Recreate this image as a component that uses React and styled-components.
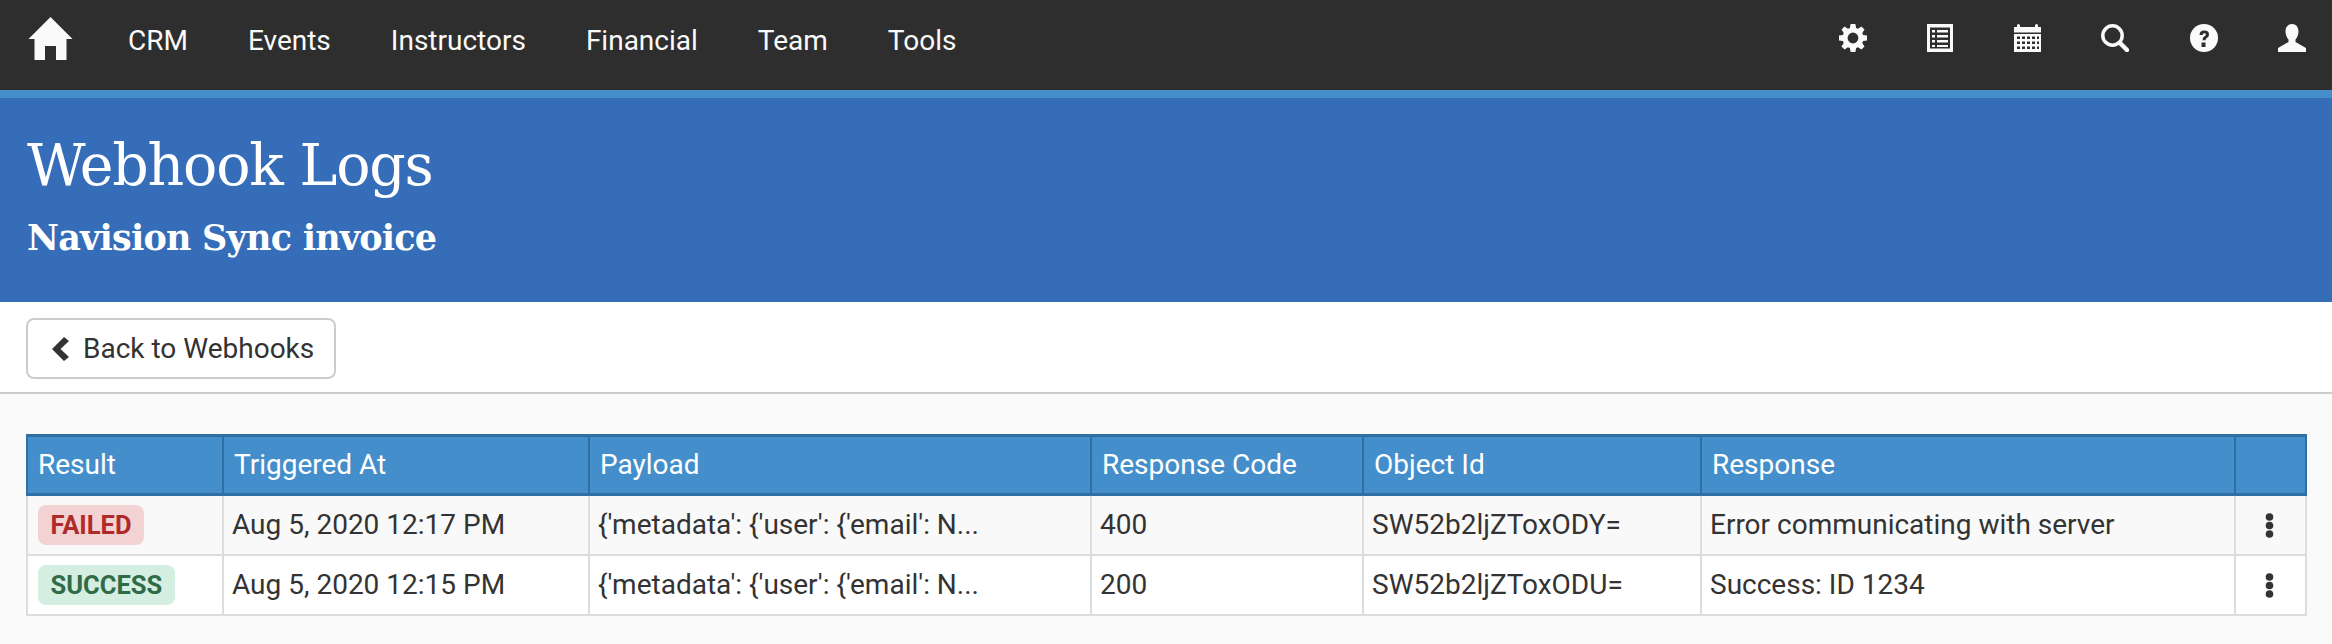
import React from "react";
import styled, { createGlobalStyle } from "styled-components";

const Global = createGlobalStyle`
  html, body { margin: 0; padding: 0; background: #fafafa; }
  body { font-family: Roboto, "Liberation Sans", sans-serif; color: #333; }
`;

const Nav = styled.nav`
  height: 90px;
  background: #2e2e2e;
  display: flex;
  align-items: flex-start;
  justify-content: space-between;
  padding: 0 26px 0 28px;
`;
const NavLeft = styled.div`
  display: flex;
  align-items: center;
  gap: 60px;
`;
const HomeLink = styled.a`
  display: block;
  height: 43px;
  margin: 17px -5px 0 0;
  svg { display: block; }
`;
const NavItem = styled.a`
  font-size: 28px;
  line-height: 30px;
  color: #fafafa;
  margin-top: 22px;
`;
const NavRight = styled.div`
  display: flex;
  gap: 60.5px;
  margin-top: 24px;
  svg { display: block; }
`;
const Banner = styled.header`
  box-sizing: content-box;
  height: 204px;
  background: #356db9;
  border-top: 8px solid #448fcb;
  padding: 0 27px;
  color: #fff;
`;
const Title = styled.h1`
  margin: 0;
  padding-top: 32px;
  font-family: "DejaVu Serif", serif;
  font-weight: 400;
  font-size: 57px;
  letter-spacing: -1.2px;
  line-height: 70px;
`;
const Subtitle = styled.h2`
  margin: 0;
  padding-top: 15px;
  font-family: "DejaVu Serif", serif;
  font-weight: 700;
  font-size: 35px;
  letter-spacing: -0.8px;
  line-height: 46px;
`;
const Toolbar = styled.div`
  height: 74px;
  background: #fff;
  border-bottom: 2px solid #ccc;
  padding: 16px 26px 0;
  box-sizing: content-box;
`;
const BackButton = styled.button`
  height: 61px;
  width: 310px;
  box-sizing: border-box;
  border: 2px solid #ccc;
  border-radius: 8px;
  background: #fff;
  color: #333;
  font: 400 28px Roboto, sans-serif;
  display: flex;
  align-items: center;
  gap: 14px;
  padding: 0 0 0 24px;
  svg { display: block; }
`;
const Content = styled.main`
  padding: 40px 27px 28px 26px;
`;
const Table = styled.table`
  width: 2279px;
  table-layout: fixed;
  border-collapse: collapse;
  font-size: 28px;
`;
const Col = styled.col`
  width: ${(p) => p.$w}px;
`;
const Th = styled.th`
  background: #448fcb;
  color: #fff;
  font-weight: 400;
  text-align: left;
  height: 54px;
  padding: 0 10px 2px;
  border: 2px solid #306fa3;
  border-top-width: 3px;
  border-bottom-width: 3px;
  overflow: hidden;
`;
const Row = styled.tr`
  background: ${(p) => (p.$odd ? "#f9f9f9" : "#fff")};
`;
const Td = styled.td`
  height: 56px;
  padding: 0 8px 2px;
  border: 2px solid #ddd;
  white-space: nowrap;
  overflow: hidden;
  color: #333;
`;
const BadgeTd = styled(Td)`
  height: 58px;
  padding: 0 10px;
`;
const MenuTd = styled(Td)`
  height: 58px;
  text-align: center;
  padding: 0 2px 0 0;
  svg { display: block; margin: 0 auto; }
`;
const Badge = styled.span`
  display: inline-block;
  height: 40px;
  line-height: 40px;
  padding: 0 12.5px;
  border-radius: 8px;
  font-size: 25.5px;
  font-weight: 700;
  vertical-align: middle;
  background: ${(p) => (p.$ok ? "#d5eee2" : "#f2d2d2")};
  color: ${(p) => (p.$ok ? "#2f6b46" : "#b02a2a")};
`;

const Home = () => (
  <svg width="45" height="43" viewBox="0 0 45 43" fill="#fafafa">
    <path d="M22.500 0 L44.500 22 L38.500 22 L38.500 43 L28 43 L28 29 L17 29 L17 43 L6.500 43 L6.500 22 L0.500 22 Z" />
  </svg>
);
const Gear = () => (
  <svg width="28" height="28" viewBox="0 0 28 28" fill="#fafafa">
    <path fillRule="evenodd" d="M11.600 0h4.800l.7 3.900 2 .8 3.300-2.200 3.100 3.100-2.200 3.300.8 2 3.900.7v4.800l-3.900.7-.8 2 2.200 3.300-3.100 3.100-3.300-2.200-2 .8-.7 3.900h-4.800l-.7-3.900-2-.8-3.300 2.200-3.100-3.100 2.200-3.300-.8-2L0 16.400v-4.800l3.900-.7.8-2-2.200-3.300 3.100-3.100 3.300 2.200 2-.8zM14 8.600a5.400 5.400 0 1 0 0 10.800 5.400 5.400 0 0 0 0-10.800z" />
  </svg>
);
const ListAlt = () => (
  <svg width="26" height="28" viewBox="0 0 26 28" fill="#fafafa">
    <path fillRule="evenodd" d="M0 0h26v28H0zM3 3.500v21h20v-21z" />
    <path d="M5 6h3v2.400H5zM10 6h11v2.400H10zM5 11h3v2.400H5zM10 11h11v2.400H10zM5 16h3v2.400H5zM10 16h11v2.400H10zM5 21h3v2H5zM10 21h11v2H10z" />
  </svg>
);
const Calendar = () => (
  <svg width="27" height="28" viewBox="0 0 27 28" fill="#fafafa">
    <path d="M0 3h3V1.500Q3 0 4.500 0T6 1.500V3h15V1.500Q21 0 22.500 0T24 1.500V3h3v5.500H0z" />
    <path fillRule="evenodd" d="M0 10h27v18H0zM3 12.500v2.500h3v-2.500zM8 12.500v2.500h3v-2.500zM13 12.500v2.500h3v-2.500zM18 12.500v2.500h3v-2.500zM23 12.500v2.500h2v-2.500zM3 17.500v2.500h3v-2.500zM8 17.500v2.500h3v-2.500zM13 17.500v2.500h3v-2.500zM18 17.500v2.500h3v-2.500zM23 17.500v2.500h2v-2.500zM3 22.500v2.500h3v-2.500zM8 22.500v2.500h3v-2.500zM13 22.500v2.500h3v-2.500zM18 22.500v2.500h3v-2.500zM23 22.500v2.500h2v-2.500z" />
  </svg>
);
const Search = () => (
  <svg width="28" height="28" viewBox="0 0 28 28" fill="none" stroke="#fafafa">
    <circle cx="11.500" cy="11.500" r="9.700" strokeWidth="3.500" />
    <path d="M19 19 L26 26" strokeWidth="4.500" strokeLinecap="round" />
  </svg>
);
const Question = () => (
  <svg width="28" height="28" viewBox="0 0 28 28">
    <circle cx="14" cy="14" r="14" fill="#fafafa" />
    <path d="M9.500 11q0-4.500 4.800-4.500 4.700 0 4.700 4 0 2.300-2.200 3.600-1.300.8-1.300 2.200h-3q0-2.800 2-4 1.400-.8 1.400-1.800 0-1.300-1.500-1.300-1.700 0-1.900 1.800z" fill="#2e2e2e" />
    <path d="M11.500 18.500h4v4.500h-4z" fill="#2e2e2e" />
  </svg>
);
const User = () => (
  <svg width="28" height="28" viewBox="0 0 28 28" fill="#fafafa">
    <path d="M14 0c4 0 6.500 3 6.500 7.500 0 3.500-1.500 6.500-3 8v2.500L28 24v4H0v-4l10.500-6v-2.500c-1.500-1.500-3-4.500-3-8C7.500 3 10 0 14 0z" />
  </svg>
);
const Chevron = () => (
  <svg width="17" height="24" viewBox="0 0 17 24" fill="#333">
    <path d="M12 0l5 4-8.500 8 8.500 8-5 4L0 12z" />
  </svg>
);
const Dots = () => (
  <svg width="9" height="25" viewBox="0 0 9 25" fill="#333">
    <circle cx="4.500" cy="4" r="3.800" />
    <circle cx="4.500" cy="12.500" r="3.800" />
    <circle cx="4.500" cy="21" r="3.800" />
  </svg>
);

const navItems = ["CRM", "Events", "Instructors", "Financial", "Team", "Tools"];
const icons = [Gear, ListAlt, Calendar, Search, Question, User];
const widths = [196, 366, 502, 272, 338, 534, 71];
const heads = ["Result", "Triggered At", "Payload", "Response Code", "Object Id", "Response", ""];
const rows = [
  { ok: false, status: "FAILED", at: "Aug 5, 2020 12:17 PM", code: "400", id: "SW52b2ljZToxODY=", res: "Error communicating with server" },
  { ok: true, status: "SUCCESS", at: "Aug 5, 2020 12:15 PM", code: "200", id: "SW52b2ljZToxODU=", res: "Success: ID 1234" },
];

export default function App() {
  return (
    <>
      <Global />
      <Nav>
        <NavLeft>
          <HomeLink><Home /></HomeLink>
          {navItems.map((n) => <NavItem key={n}>{n}</NavItem>)}
        </NavLeft>
        <NavRight>
          {icons.map((I, i) => <I key={i} />)}
        </NavRight>
      </Nav>
      <Banner>
        <Title>Webhook Logs</Title>
        <Subtitle>Navision Sync invoice</Subtitle>
      </Banner>
      <Toolbar>
        <BackButton><Chevron />Back to Webhooks</BackButton>
      </Toolbar>
      <Content>
        <Table>
          <colgroup>{widths.map((w, i) => <Col key={i} $w={w} />)}</colgroup>
          <thead>
            <tr>{heads.map((h, i) => <Th key={i}>{h}</Th>)}</tr>
          </thead>
          <tbody>
            {rows.map((r, i) => (
              <Row key={r.status} $odd={i === 0}>
                <BadgeTd><Badge $ok={r.ok}>{r.status}</Badge></BadgeTd>
                <Td>{r.at}</Td>
                <Td>{"{'metadata': {'user': {'email': N..."}</Td>
                <Td>{r.code}</Td>
                <Td>{r.id}</Td>
                <Td>{r.res}</Td>
                <MenuTd><Dots /></MenuTd>
              </Row>
            ))}
          </tbody>
        </Table>
      </Content>
    </>
  );
}
